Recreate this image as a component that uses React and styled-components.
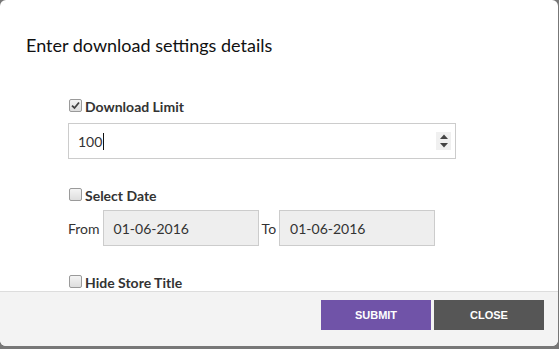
import React from 'react';
import styled, {createGlobalStyle} from "styled-components";

const Global = createGlobalStyle`
  html, body {
    margin: 0;
    padding: 0;
    background: #777777;
    font-family: Lato, "Liberation Sans", sans-serif;
  }
`;

const CheckBox = ({checked}) => (
    <Box checked={checked}>
        {checked &&
            <svg width="9" height="9" viewBox="0 0 9 9">
                <path d="M1 4.6 L3.5 7 L8 1.5" fill="none" stroke="#444" strokeWidth="1.8"/>
            </svg>
        }
    </Box>
);

const Check = ({checked, label}) => (
    <CheckRow>
        <CheckBox checked={checked}/>
        <CheckLabel>{label}</CheckLabel>
    </CheckRow>
);

const App = () => {
    return (
        <>
            <Global/>
            <Modal>
                <Body>
                    <Title>Enter download settings details</Title>
                    <Form>
                        <Check checked label="Download Limit"/>
                        <NumberInput>
                            <span>100</span>
                            <Caret/>
                            <Spinner>
                                <svg width="8" height="14" viewBox="0 0 8 14">
                                    <path d="M0 5 L4 0.5 L8 5 Z" fill="#444"/>
                                    <path d="M0 9 L4 13.5 L8 9 Z" fill="#444"/>
                                </svg>
                            </Spinner>
                        </NumberInput>
                        <Section>
                            <Check label="Select Date"/>
                        </Section>
                        <DateRow>
                            <DateLabel>From</DateLabel>
                            <DateInput>01-06-2016</DateInput>
                            <DateLabel>To</DateLabel>
                            <DateInput>01-06-2016</DateInput>
                        </DateRow>
                        <Section>
                            <Check label="Hide Store Title"/>
                        </Section>
                    </Form>
                </Body>
                <Footer>
                    <Button bg="#7053a8">SUBMIT</Button>
                    <Button bg="#565656">CLOSE</Button>
                </Footer>
            </Modal>
        </>
    )
}

export default App;

const Modal = styled.div`
  width: 558px;
  height: 346px;
  background: #ffffff;
  border-radius: 6px;
  overflow: hidden;
  display: flex;
  flex-direction: column;
`;
const Body = styled.div`
  height: 291px;
  overflow: hidden;
  border-bottom: 1px solid #dddddd;
`;
const Title = styled.div`
  padding: 34px 0 0 26px;
  font-size: 18px;
  line-height: 22px;
  color: #111111;
`;
const Form = styled.div`
  margin: 40px 0 0 68px;
  width: 388px;
  display: flex;
  flex-direction: column;
`;
const CheckRow = styled.div`
  display: flex;
  align-items: center;
  height: 20px;
  padding-left: 1px;
`;
const Box = styled.span`
  width: 11px;
  height: 11px;
  border: 1px solid #9a9a9a;
  border-radius: 2px;
  background: linear-gradient(#f4f4f4, #dedede);
  display: flex;
  align-items: center;
  justify-content: center;
  margin-right: 3px;
  margin-top: -2px;
`;
const CheckLabel = styled.span`
  font-size: 14px;
  font-weight: bold;
  color: #333333;
`;
const NumberInput = styled.div`
  margin-top: 7px;
  height: 36px;
  box-sizing: border-box;
  border: 1px solid #cccccc;
  display: flex;
  align-items: center;
  padding: 0 4px 0 9px;
  font-size: 14px;
  color: #333333;
`;
const Caret = styled.span`
  width: 1px;
  height: 17px;
  background: #111111;
  margin-left: 1px;
`;
const Spinner = styled.div`
  margin-left: auto;
  width: 15px;
  height: 18px;
  background: #f0f0f0;
  display: flex;
  align-items: center;
  justify-content: center;
`;
const Section = styled.div`
  margin-top: 26px;
`;
const DateRow = styled.div`
  margin-top: 5px;
  display: flex;
  align-items: center;
`;
const DateLabel = styled.span`
  font-size: 14px;
  color: #333333;
  margin-right: 3px;
  &:not(:first-child) {
    margin-left: 3px;
  }
`;
const DateInput = styled.div`
  width: 156px;
  height: 36px;
  box-sizing: border-box;
  border: 1px solid #cccccc;
  background: #eeeeee;
  display: flex;
  align-items: center;
  padding-left: 10px;
  font-size: 14px;
  color: #333333;
`;
const Footer = styled.div`
  flex: 1;
  background: #f3f3f3;
  display: flex;
  justify-content: flex-end;
  align-items: flex-start;
  gap: 3px;
  padding: 8px 14px 0 0;
`;
const Button = styled.div`
  width: 110px;
  height: 30px;
  background: ${props => props.bg};
  color: #ffffff;
  font-family: "Liberation Sans", Arial, sans-serif;
  font-weight: bold;
  font-size: 11px;
  display: flex;
  align-items: center;
  justify-content: center;
`;
